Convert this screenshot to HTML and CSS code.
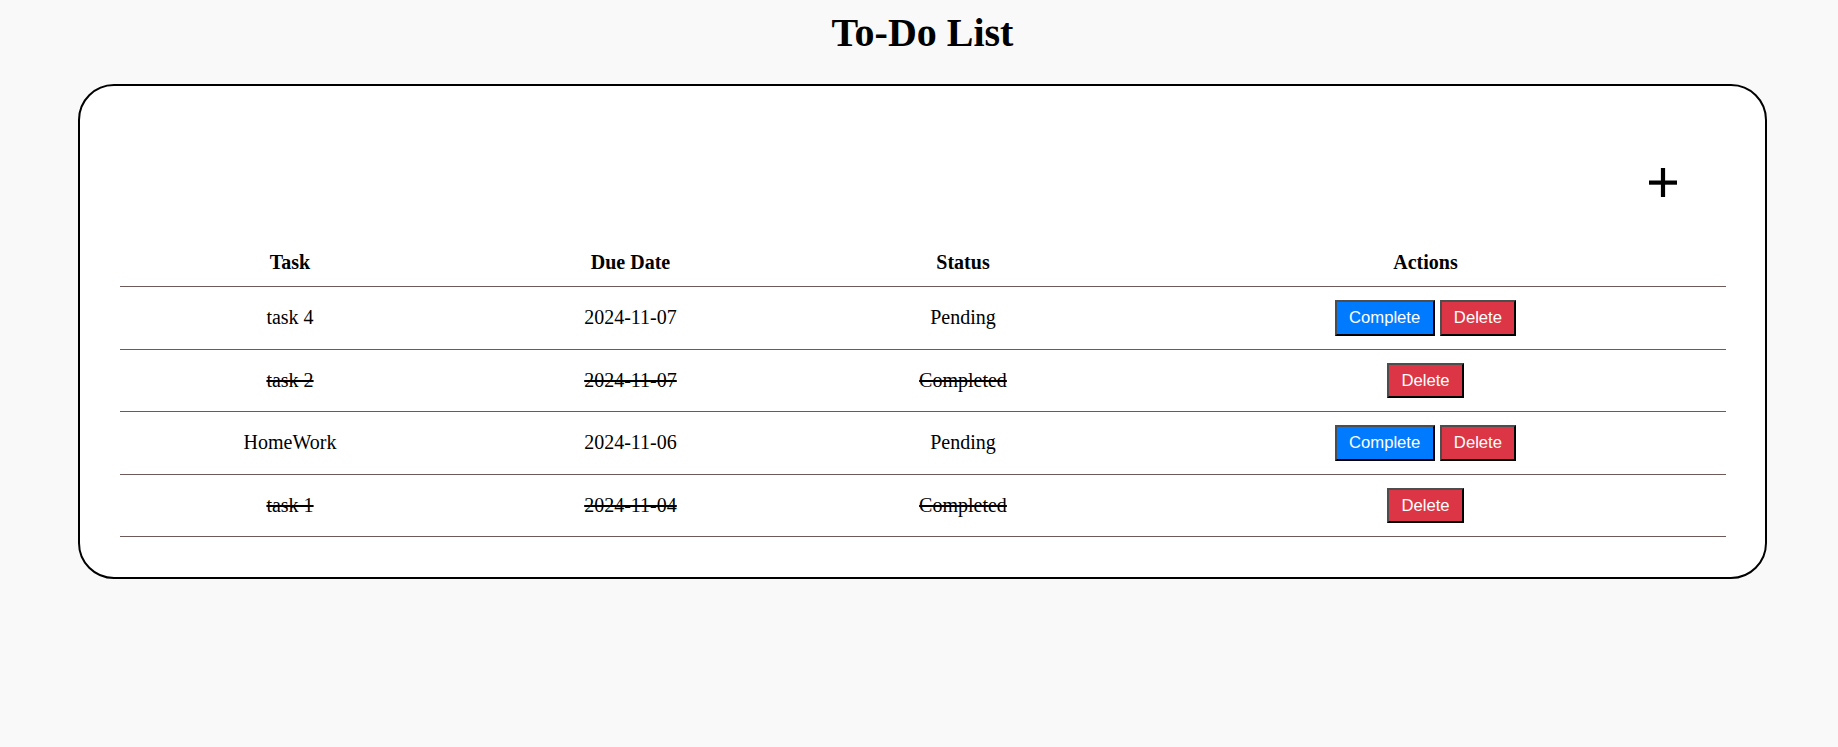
FILE: index.html
```html
<!DOCTYPE html>
<html lang="en">
<head>
<meta charset="utf-8">
<title>To-Do List</title>
<link rel="stylesheet" href="styles.css">
</head>
<body>
<div class="page">
  <h1 class="title">To-Do List</h1>
  <div class="card">
    <div class="toolbar">
      <button class="add-btn" type="button" aria-label="Add task">
        <svg class="add-icon" width="28" height="29" viewBox="0 0 28 29" aria-hidden="true">
          <rect x="0" y="12.5" width="28" height="4.2" fill="#000"/>
          <rect x="11.9" y="0" width="4.2" height="29" fill="#000"/>
        </svg>
      </button>
    </div>
    <div class="todo-table">
      <div class="row head">
        <div class="cell">Task</div>
        <div class="cell">Due Date</div>
        <div class="cell">Status</div>
        <div class="cell">Actions</div>
      </div>
      <div class="row">
        <div class="cell">task 4</div>
        <div class="cell">2024-11-07</div>
        <div class="cell">Pending</div>
        <div class="cell actions">
          <button class="btn btn-complete" type="button">Complete</button>
          <button class="btn btn-delete" type="button">Delete</button>
        </div>
      </div>
      <div class="row done">
        <div class="cell"><span class="strike">task 2</span></div>
        <div class="cell"><span class="strike">2024-11-07</span></div>
        <div class="cell"><span class="strike">Completed</span></div>
        <div class="cell actions">
          <button class="btn btn-delete" type="button">Delete</button>
        </div>
      </div>
      <div class="row">
        <div class="cell">HomeWork</div>
        <div class="cell">2024-11-06</div>
        <div class="cell">Pending</div>
        <div class="cell actions">
          <button class="btn btn-complete" type="button">Complete</button>
          <button class="btn btn-delete" type="button">Delete</button>
        </div>
      </div>
      <div class="row done">
        <div class="cell"><span class="strike">task 1</span></div>
        <div class="cell"><span class="strike">2024-11-04</span></div>
        <div class="cell"><span class="strike">Completed</span></div>
        <div class="cell actions">
          <button class="btn btn-delete" type="button">Delete</button>
        </div>
      </div>
    </div>
  </div>
</div>
</body>
</html>
```

FILE: styles.css
```css
html, body {
  margin: 0;
  padding: 0;
  background: #f9f9f9;
}

body {
  font-family: "Liberation Serif", "Times New Roman", serif;
  font-size: 20px;
  color: #000;
}

.page {
  padding: 10px 71px 0 78px;
}

.title {
  margin: 0 0 28px;
  font-size: 40px;
  line-height: 46px;
  font-weight: bold;
  text-align: center;
}

.card {
  background: #fff;
  border: 2px solid #000;
  border-radius: 36px;
  padding: 40px 39px 40px 40px;
}

.toolbar {
  height: 112px;
  display: flex;
  justify-content: flex-end;
  align-items: center;
}

.add-btn {
  width: 70px;
  height: 60px;
  margin-right: 28px;
  padding: 0;
  border: none;
  background: transparent;
  display: flex;
  align-items: center;
  justify-content: center;
  cursor: pointer;
}

.add-icon {
  display: block;
}

.todo-table {
  display: flex;
  flex-direction: column;
}

.row {
  display: grid;
  grid-template-columns: 340px 341px 324px 601px;
  align-items: center;
  box-sizing: border-box;
  height: 62.6px;
  border-bottom: 1px solid #6f5a5a;
  line-height: 23px;
}

.row.head {
  height: 49px;
  font-weight: bold;
}

.cell {
  text-align: center;
}

.strike {
  text-decoration: line-through;
}

.actions {
  display: flex;
  justify-content: center;
  gap: 5px;
}

.btn {
  font-family: "Liberation Sans", Arial, sans-serif;
  font-size: 16.67px;
  line-height: 19px;
  color: #fff;
  padding: 6.3px 12.3px;
  border-width: 2px;
  border-style: solid;
  border-color: #4d4d4d #000 #000 #4d4d4d;
  cursor: pointer;
}

.btn-complete {
  background: #007bff;
}

.btn-delete {
  background: #dc3545;
}
```
